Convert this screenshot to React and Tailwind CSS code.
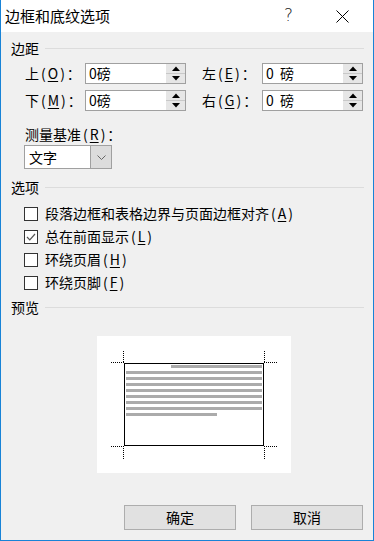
const font = { fontFamily: '"Noto Sans CJK SC", "Microsoft YaHei", sans-serif' };

const Acc = ({ k }) => (
  <span className="inline-flex items-center">
    <span className="mx-[2px]">(</span>
    <span className="underline underline-offset-2">{k}</span>
    <span className="mx-[2px]">)</span>
  </span>
);

const SectionHead = ({ title, className = "" }) => (
  <div className={`flex items-center h-[20px] ${className}`}>
    <span className="text-[14px] leading-[20px] w-[34px]">{title}</span>
    <div className="flex-1 h-px bg-[#dcdcdc]" />
  </div>
);

const Spinner = () => (
  <div className="w-[19px] h-[19px] flex flex-col bg-[#e6e6e6]">
    <div className="flex-1 flex items-center justify-center border-b border-[#c8c8c8]">
      <svg width="8" height="5" viewBox="0 0 8 5">
        <path d="M0 5 L4 0.5 L8 5 Z" fill="#000" />
      </svg>
    </div>
    <div className="flex-1 flex items-center justify-center">
      <svg width="8" height="5" viewBox="0 0 8 5">
        <path d="M0 0 L4 4.5 L8 0 Z" fill="#000" />
      </svg>
    </div>
  </div>
);

const NumField = ({ value }) => (
  <div className="w-[101px] h-[21px] bg-white border border-[#a0a0a0] flex items-center justify-between">
    <span className="pl-[3px] text-[14px] leading-[19px] whitespace-pre">{value}</span>
    <Spinner />
  </div>
);

const MarginRow = ({ l1, k1, v1, l2, k2, v2, className = "" }) => (
  <div className={`flex items-center h-[21px] pl-[14px] ${className}`}>
    <span className="w-[60px] text-[14px] flex items-center">
      {l1}
      <Acc k={k1} />：
    </span>
    <NumField value={v1} />
    <span className="w-[60px] ml-[16px] text-[14px] flex items-center">
      {l2}
      <Acc k={k2} />：
    </span>
    <NumField value={v2} />
  </div>
);

const Check = ({ checked, label, k }) => (
  <div className="flex items-center h-[23px] pl-[13px]">
    <div className="w-[14px] h-[14px] bg-white border border-[#333] flex items-center justify-center">
      {checked && (
        <svg width="10" height="8" viewBox="0 0 10 8">
          <path d="M1 4 L3.8 6.8 L9 1" stroke="#555" strokeWidth="1.2" fill="none" />
        </svg>
      )}
    </div>
    <span className="ml-[7px] text-[14px] flex items-center">
      {label}
      <Acc k={k} />
    </span>
  </div>
);

const Preview = () => {
  const full = [35, 41, 47, 53, 59, 65, 71];
  return (
    <svg width="194" height="137" viewBox="0 0 194 137" className="block">
      <rect x="0" y="0" width="194" height="137" fill="#fff" />
      <rect x="27.5" y="27.5" width="139" height="82" fill="none" stroke="#000" strokeWidth="1" />
      <rect x="74" y="29" width="91" height="3" fill="#ababab" />
      {full.map((y) => (
        <rect key={y} x="29" y={y} width="136" height="3" fill="#ababab" />
      ))}
      <rect x="29" y="77" width="91" height="3" fill="#ababab" />
      <g stroke="#000" strokeWidth="1" strokeDasharray="1 1">
        <line x1="26.5" y1="15" x2="26.5" y2="27" />
        <line x1="14" y1="26.5" x2="27" y2="26.5" />
        <line x1="167.5" y1="15" x2="167.5" y2="27" />
        <line x1="167" y1="26.5" x2="180" y2="26.5" />
        <line x1="14" y1="110.5" x2="27" y2="110.5" />
        <line x1="26.5" y1="110" x2="26.5" y2="123" />
        <line x1="167" y1="110.5" x2="180" y2="110.5" />
        <line x1="167.5" y1="110" x2="167.5" y2="123" />
      </g>
    </svg>
  );
};

export default function App() {
  return (
    <div
      style={font}
      className="w-[374px] h-[541px] flex flex-col border-x border-b border-[#1883d7] text-black bg-[#f0f0f0]"
    >
      <div className="h-[32px] bg-white flex items-center pl-[4px] shrink-0">
        <span className="text-[15px] flex-1">边框和底纹选项</span>
        <span
          className="text-[17px] w-[20px] mr-[32px] text-[#222]"
          style={{ fontFamily: '"DejaVu Sans", sans-serif', fontWeight: 300 }}
        >
          ?
        </span>
        <svg width="13" height="13" viewBox="0 0 13 13" className="mr-[24px]">
          <path d="M0.5 0.5 L12.5 12.5 M12.5 0.5 L0.5 12.5" stroke="#000" strokeWidth="1" />
        </svg>
      </div>

      <div className="flex-1 flex flex-col pl-[10px] pr-[9px]">
        <SectionHead title="边距" className="mt-[6px]" />
        <MarginRow className="mt-[5px]" l1="上" k1="O" v1="0磅" l2="左" k2="E" v2="0  磅" />
        <MarginRow className="mt-[6px]" l1="下" k1="M" v1="0磅" l2="右" k2="G" v2="0  磅" />

        <div className="mt-[13px] h-[20px] pl-[14px] text-[14px] flex items-center">
          测量基准<Acc k="R" />：
        </div>
        <div className="mt-[1px] ml-[13px] w-[88px] h-[24px] flex bg-white border border-[#a0a0a0]">
          <span className="flex-1 pl-[4px] text-[14px] leading-[22px]">文字</span>
          <div className="w-[21px] bg-[#dcdcdc] border-l border-[#a0a0a0] flex items-center justify-center">
            <svg width="9" height="5" viewBox="0 0 9 5">
              <path d="M0.5 0.5 L4.5 4.5 L8.5 0.5" stroke="#666" strokeWidth="1" fill="none" />
            </svg>
          </div>
        </div>

        <SectionHead title="选项" className="mt-[8px]" />
        <div className="mt-[5px] flex flex-col">
          <Check label="段落边框和表格边界与页面边框对齐" k="A" />
          <Check checked label="总在前面显示" k="L" />
          <Check label="环绕页眉" k="H" />
          <Check label="环绕页脚" k="F" />
        </div>

        <SectionHead title="预览" className="mt-[3px]" />
        <div className="mt-[19px] ml-[86px]">
          <Preview />
        </div>

        <div className="mt-[32px] flex justify-end gap-[15px] pr-[1px]">
          <button className="w-[112px] h-[25px] bg-[#e1e1e1] border border-[#adadad] text-[14px]">
            确定
          </button>
          <button className="w-[112px] h-[25px] bg-[#e1e1e1] border border-[#adadad] text-[14px]">
            取消
          </button>
        </div>
      </div>
    </div>
  );
}
